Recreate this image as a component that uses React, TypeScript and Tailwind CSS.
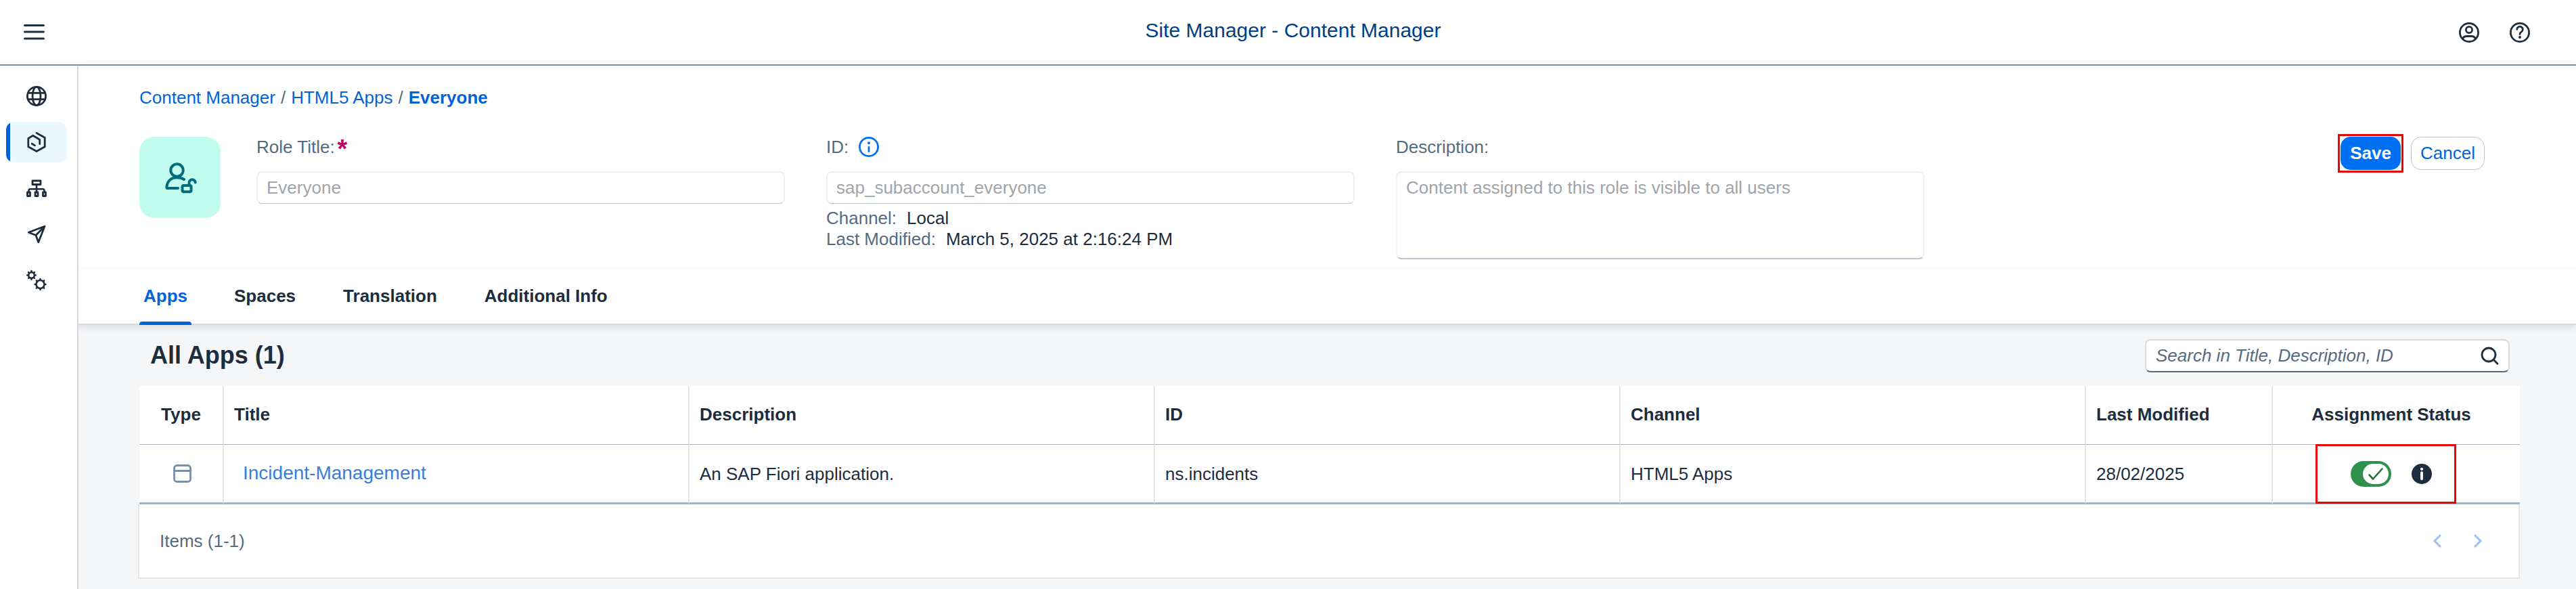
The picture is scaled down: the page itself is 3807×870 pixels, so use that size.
import React from 'react';

type IconProps = { className?: string };

const stroke = {
  fill: 'none',
  stroke: 'currentColor',
  strokeWidth: 2.8,
  strokeLinecap: 'round' as const,
  strokeLinejoin: 'round' as const,
};

function MenuIcon() {
  return (
    <svg viewBox="0 0 31 23" className="h-[23px] w-[31px]" {...stroke} strokeWidth={3}>
      <path d="M1.5 1.5h28M1.5 11h28M1.5 21h28" />
    </svg>
  );
}

function UserIcon() {
  return (
    <svg viewBox="0 0 30 30" className="size-[30px]" {...stroke}>
      <circle cx="15" cy="15" r="13.6" />
      <circle cx="15" cy="11" r="4.6" />
      <path d="M5.5 24.5c1-3 3.5-4 6-4h7c2.5 0 5 1 6 4" />
    </svg>
  );
}

function HelpIcon() {
  return (
    <svg viewBox="0 0 30 30" className="size-[30px]" {...stroke}>
      <circle cx="15" cy="15" r="13.6" />
      <path d="M10.7 10.3a4.3 4.3 0 1 1 6.4 3.9c-1.4.8-2.1 1.6-2.1 3.3" />
      <circle cx="15" cy="22" r="2" fill="currentColor" stroke="none" />
    </svg>
  );
}

function GlobeIcon() {
  return (
    <svg viewBox="0 0 30 30" className="size-[30px]" {...stroke}>
      <circle cx="15" cy="15" r="13.6" />
      <ellipse cx="15" cy="15" rx="6" ry="13.6" />
      <path d="M2.5 10.3h25M2.5 19.7h25" />
    </svg>
  );
}

function ContentIcon() {
  return (
    <svg viewBox="0 0 30 30" className="size-[30px]" {...stroke}>
      <path d="M15 1.5 27.2 8.3v13.400L15 28.500 2.800 21.700V9.500L9.700 5.200 19.700 11.200v6.500" />
      <path d="M8.2 17.3l4.300 2.600" />
    </svg>
  );
}

function HierarchyIcon() {
  return (
    <svg viewBox="0 0 30 30" className="size-[30px]" {...stroke}>
      <rect x="9" y="4" width="12" height="5.5" />
      <path d="M15 9.500v11M3.500 20.500v-2c0-1.500.8-2.300 2.200-2.300h18.600c1.400 0 2.200.8 2.200 2.300v2" strokeWidth={2.6} />
      <rect x="1.5" y="21" width="4" height="5.5" />
      <rect x="13" y="21" width="4" height="5.5" />
      <rect x="24.5" y="21" width="4" height="5.5" />
    </svg>
  );
}

function SendIcon() {
  return (
    <svg viewBox="0 0 30 30" className="size-[30px]" {...stroke}>
      <path d="M27 3.200 3.300 12.300l10.700 4.200L17.800 26.800ZM27 3.200 14 16.500" />
    </svg>
  );
}

function Gear({ cx, cy, r, tooth }: { cx: number; cy: number; r: number; tooth: number }) {
  return (
    <g>
      <circle cx={cx} cy={cy} r={r} />
      {[0, 45, 90, 135, 180, 225, 270, 315].map((a) => (
        <path key={a} d={`M${cx} ${cy - r - 1}v${-tooth}`} transform={`rotate(${a} ${cx} ${cy})`} />
      ))}
    </g>
  );
}

function SettingsIcon() {
  return (
    <svg viewBox="0 0 30 30" className="size-[30px] overflow-visible" {...stroke} strokeWidth={2.5}>
      <Gear cx={7.5} cy={7.5} r={4.3} tooth={0.9} />
      <Gear cx={20.5} cy={21} r={6} tooth={1} />
    </svg>
  );
}

function RoleIcon() {
  return (
    <svg viewBox="0 0 45 45" className="size-[45px] overflow-visible" {...stroke} strokeWidth={4}>
      <circle cx="17.5" cy="11.5" r="9.2" />
      <path d="M19 38H2.500c-.5-9 5.500-15.800 14-15.800 4.500 0 8.500.8 11.500 2.800" />
      <rect x="25.5" y="34" width="13" height="9.2" rx="2" />
      <path d="M35.500 33.500v-3.200a4.600 4.600 0 0 1 9.200 -.8" />
    </svg>
  );
}

function InfoOutlineIcon() {
  return (
    <svg viewBox="0 0 30 30" className="size-[30px]" {...stroke}>
      <circle cx="15" cy="15" r="13.6" />
      <path d="M15 15.500v6" />
      <circle cx="15" cy="9.3" r="2" fill="currentColor" stroke="none" />
    </svg>
  );
}

function InfoSolidIcon() {
  return (
    <svg viewBox="0 0 30 30" className="size-[30px]">
      <circle cx="15" cy="15" r="15" fill="#1d2d3e" />
      <circle cx="15" cy="7.8" r="2.1" fill="#fff" />
      <path d="M15 13.200v9" stroke="#fff" strokeWidth="4" strokeLinecap="round" />
    </svg>
  );
}

function SearchIcon() {
  return (
    <svg viewBox="0 0 27 27" className="size-[27px]" {...stroke}>
      <circle cx="12" cy="12" r="10" />
      <path d="M19.500 19.500 25 25.200" />
    </svg>
  );
}

function WindowIcon() {
  return (
    <svg viewBox="0 0 27 27" className="size-[27px] text-[#788fa6]" {...stroke}>
      <rect x="1.5" y="1.5" width="24" height="24" rx="4" />
      <path d="M1.500 9.500h24" />
    </svg>
  );
}

function Chevron({ className }: IconProps) {
  return (
    <svg viewBox="0 0 12 20" className={className} {...stroke} strokeWidth={3}>
      <path d="M10 2 2 10l8 8" />
    </svg>
  );
}

const navItems = [
  { label: 'Site Directory', Icon: GlobeIcon },
  { label: 'Content Manager', Icon: ContentIcon, active: true },
  { label: 'Channel Manager', Icon: HierarchyIcon },
  { label: 'Transport Manager', Icon: SendIcon },
  { label: 'Settings', Icon: SettingsIcon },
];

const tabs = ['Apps', 'Spaces', 'Translation', 'Additional Info'];

const field =
  'w-full rounded-[8px] border-2 border-[#eff0f1] bg-white px-[13px] text-[26px] leading-[30px] text-[#a1a4a8] outline-none';

const th = 'h-[87px] border-b border-[#a8b3be] pb-[2px] font-bold';
const td = 'h-[88px] border-b-[3px] border-[#a7b2bd]';
const divider = 'border-r-2 border-r-[#e5e5e5]';

export default function App() {
  return (
    <div className="flex min-h-screen flex-col bg-white font-['Liberation_Sans',Arial,sans-serif] text-[26px] leading-[30px] text-[#1d2d3e]">
      <header className="grid h-[97px] grid-cols-[1fr_auto_1fr] items-center border-b-2 border-[#788fa6] pl-[35px] pr-[20px]">
        <button type="button" aria-label="Menu" className="justify-self-start">
          <MenuIcon />
        </button>
        <h1 className="pb-[6px] text-[30px] leading-[36px] text-[#003e87]">Site Manager - Content Manager</h1>
        <div className="mr-[26px] flex justify-end">
          <button type="button" aria-label="Profile" className="flex w-[75px] justify-center">
            <UserIcon />
          </button>
          <button type="button" aria-label="Help" className="flex w-[75px] justify-center">
            <HelpIcon />
          </button>
        </div>
      </header>

      <div className="flex flex-1">
        <nav className="flex w-[116px] shrink-0 flex-col gap-2 border-r-2 border-[#d9d9d9] pl-[9px] pt-[15px]">
          {navItems.map(({ label, Icon, active }) => (
            <a
              key={label}
              href="#"
              aria-label={label}
              className={
                active
                  ? 'flex h-[60px] w-[90px] items-center justify-center overflow-hidden rounded-[12px] bg-[linear-gradient(to_right,#0064d9_6px,#ebf8ff_6px)]'
                  : 'flex h-[60px] w-[90px] items-center justify-center'
              }
            >
              <Icon />
            </a>
          ))}
        </nav>

        <main className="flex min-w-0 flex-1 flex-col overflow-x-clip bg-[#f5f6f8]">
          <section className="relative border-b-2 border-[#d9dadb] bg-white shadow-[0_4px_8px_rgba(34,54,73,0.12)]">
            <div className="h-[299px] border-b border-[#f7f7f8] pl-[90px] pr-[135px] pt-[32px]">
              <nav className="flex gap-2">
                <a href="#" className="text-[#0064d9]">Content Manager</a>
                <span className="text-[#556b82]">/</span>
                <a href="#" className="text-[#0064d9]">HTML5 Apps</a>
                <span className="text-[#556b82]">/</span>
                <a href="#" className="font-bold text-[#0064d9]">Everyone</a>
              </nav>

              <div className="mt-[43px] flex items-start">
                <div className="flex size-[120px] shrink-0 items-center justify-center rounded-[22px] bg-[#c2fcee] text-[#046c7a]">
                  <RoleIcon />
                </div>
                <div className="ml-[53px] grid max-w-[2465px] flex-1 grid-cols-3 items-start gap-[61px]">
                  <div className="flex flex-col gap-[21px]">
                    <label htmlFor="role-title" className="flex h-[30px] gap-1 text-[#556b82]">
                      Role Title:
                      <span className="text-[38px] font-bold leading-[36px] text-[#ba066c]">*</span>
                    </label>
                    <input id="role-title" readOnly defaultValue="Everyone" className={`${field} h-[48px] border-b border-b-[#bcc5cf]`} />
                  </div>
                  <div>
                    <div className="mb-[21px] flex h-[30px] items-center gap-[15px]">
                      <label htmlFor="role-id" className="text-[#556b82]">ID:</label>
                      <button type="button" aria-label="ID information" className="text-[#0070f2]">
                        <InfoOutlineIcon />
                      </button>
                    </div>
                    <input id="role-id" readOnly defaultValue="sap_subaccount_everyone" className={`${field} h-[48px] border-b border-b-[#bcc5cf]`} />
                    <dl className="mt-[6px] leading-[31px]">
                      <div className="flex gap-[15px]">
                        <dt className="text-[#556b82]">Channel:</dt>
                        <dd>Local</dd>
                      </div>
                      <div className="flex gap-[15px]">
                        <dt className="text-[#556b82]">Last Modified:</dt>
                        <dd>March 5, 2025 at 2:16:24 PM</dd>
                      </div>
                    </dl>
                  </div>
                  <div className="flex flex-col gap-[21px]">
                    <label htmlFor="role-description" className="text-[#556b82]">Description:</label>
                    <textarea
                      id="role-description"
                      readOnly
                      defaultValue="Content assigned to this role is visible to all users"
                      className={`${field} h-[130px] resize-none border-b-[#bcc5cf] pt-[7px]`}
                    />
                  </div>
                </div>
                <div className="ml-auto flex gap-[15px]">
                  <div className="relative">
                    <button type="button" className="h-[49px] w-[89px] rounded-[15px] bg-[#0070f2] pb-[2px] font-bold text-white">
                      Save
                    </button>
                    <span className="pointer-events-none absolute -inset-1 border-[3px] border-[#eb0505]" />
                  </div>
                  <button type="button" className="h-[49px] w-[109px] rounded-[15px] border border-[#bcc3ca] bg-white pb-[2px] text-[#0064d9]">
                    Cancel
                  </button>
                </div>
              </div>
            </div>

            <div role="tablist" className="flex h-[82px] gap-[56px] pl-[90px]">
              {tabs.map((tab, i) => (
                <button
                  key={tab}
                  type="button"
                  role="tab"
                  aria-selected={i === 0}
                  className={
                    i === 0
                      ? 'relative px-[6px] font-bold text-[#0064d9] after:absolute after:inset-x-0 after:-bottom-[2px] after:h-[5px] after:rounded-t-[4px] after:bg-[#0064d9]'
                      : 'px-[7px] font-bold'
                  }
                >
                  {tab}
                </button>
              ))}
            </div>
          </section>

          <section className="pb-[15px] pl-[90px] pr-[83px]">
            <div className="flex h-[90px] items-center justify-between pl-[16px] pr-[15px]">
              <h2 className="text-[36px] font-bold leading-[42px]">All Apps (1)</h2>
              <div className="flex h-[49px] w-[539px] items-center rounded-[8px] border-2 border-[#d5dadf] border-b-[#556b82] bg-white px-[14px]">
                <input
                  type="search"
                  aria-label="Search"
                  placeholder="Search in Title, Description, ID"
                  className="min-w-0 flex-1 bg-transparent italic outline-none placeholder:text-[#556b82]"
                />
                <button type="button" aria-label="Search">
                  <SearchIcon />
                </button>
              </div>
            </div>

            <table className="w-full table-fixed border-separate border-spacing-0 bg-white text-left">
              <colgroup>
                <col className="w-[125px]" />
                <col />
                <col />
                <col />
                <col />
                <col className="w-[276px]" />
                <col className="w-[365px]" />
              </colgroup>
              <thead>
                <tr>
                  <th className={`${th} ${divider} text-center`}>Type</th>
                  <th className={`${th} ${divider} pl-[15px]`}>Title</th>
                  <th className={`${th} ${divider} pl-[15px]`}>Description</th>
                  <th className={`${th} ${divider} pl-[15px]`}>ID</th>
                  <th className={`${th} ${divider} pl-[15px]`}>Channel</th>
                  <th className={`${th} ${divider} pl-[15px]`}>Last Modified</th>
                  <th className={`${th} pr-[15px] text-center`}>Assignment Status</th>
                </tr>
              </thead>
              <tbody>
                <tr>
                  <td className={`${td} ${divider}`}>
                    <span className="flex justify-center pl-[4px]">
                      <WindowIcon />
                    </span>
                  </td>
                  <td className={`${td} ${divider} pb-[2px] pl-[28px]`}>
                    <a href="#" className="text-[28px] text-[#3a7ddb]">Incident-Management</a>
                  </td>
                  <td className={`${td} ${divider} pl-[15px]`}>An SAP Fiori application.</td>
                  <td className={`${td} ${divider} pl-[15px]`}>ns.incidents</td>
                  <td className={`${td} ${divider} pl-[15px]`}>HTML5 Apps</td>
                  <td className={`${td} ${divider} pl-[15px]`}>28/02/2025</td>
                  <td className={`${td} pr-[15px]`}>
                    <div className="relative mx-auto flex w-[120px] items-center justify-between">
                      <label className="relative block h-[38px] w-[60px]">
                        <input type="checkbox" role="switch" defaultChecked aria-label="Assignment Status" className="absolute inset-0 size-full appearance-none rounded-full bg-[#30914c]" />
                        <span className="pointer-events-none absolute right-1 top-1 flex h-[30px] w-[38px] items-center justify-center rounded-full bg-white text-[#256f3a]">
                          <svg viewBox="0 0 24 20" className="h-[20px] w-[24px]" {...stroke} strokeWidth={2.6}>
                            <path d="M2.500 11.500 8 17.500 21.500 2.500" />
                          </svg>
                        </span>
                      </label>
                      <button type="button" aria-label="Status information">
                        <InfoSolidIcon />
                      </button>
                      <span className="pointer-events-none absolute -inset-y-[25px] -left-[52px] -right-[36px] border-[3px] border-[#eb0505]" />
                    </div>
                  </td>
                </tr>
              </tbody>
            </table>

            <div className="-ml-[2px] flex h-[110px] items-center justify-between border-2 border-t-0 border-[#e5e5e5] bg-white pl-[30px] pr-[54px]">
              <span className="text-[#556b82]">Items (1-1)</span>
              <div className="flex gap-12 text-[#97c1f2]">
                <button type="button" aria-label="Previous page">
                  <Chevron className="h-[20px] w-[12px]" />
                </button>
                <button type="button" aria-label="Next page">
                  <Chevron className="h-[20px] w-[12px] rotate-180" />
                </button>
              </div>
            </div>
          </section>
        </main>
      </div>
    </div>
  );
}
